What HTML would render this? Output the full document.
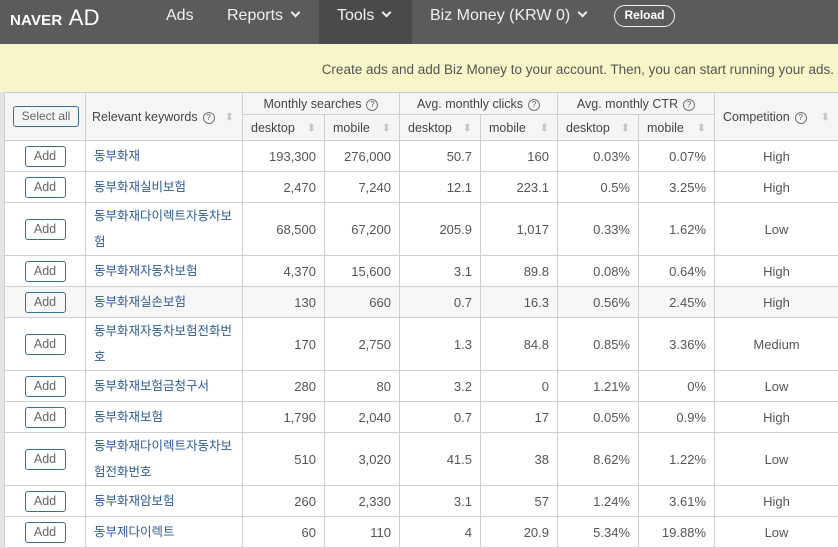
<!DOCTYPE html>
<html><head><meta charset="utf-8"><style>
*{margin:0;padding:0;box-sizing:border-box}
body{width:838px;height:548px;overflow:hidden;font-family:"Liberation Sans","Noto Sans CJK KR",sans-serif;background:#fff;position:relative}
.nav{position:absolute;left:0;top:0;width:838px;height:44px;background:#5b5b5b;color:#fff}
.nav span{position:absolute;top:7px;font-size:16px;color:#f0f0f0}
.logo{position:absolute;left:10px;top:5px;color:#fff;font-size:15px;font-weight:900;letter-spacing:.2px}
.logo b{font-weight:normal;font-size:22px;margin-left:2px}
.tools{position:absolute;left:319px;top:0;width:93px;height:44px;background:#4a4a4a}
.chev{display:inline-block;width:7px;height:7px;border-right:2px solid #eee;border-bottom:2px solid #eee;transform:rotate(45deg);margin-left:9px;position:relative;top:-4px}
.reload{position:absolute;left:614px;top:5px;width:61px;height:22px;border:1.5px solid #eee;border-radius:12px;font-size:12px;font-weight:bold;color:#fff;text-align:center;line-height:19px}
.banner{position:absolute;left:0;top:44px;width:838px;height:48px;background:#f7f6c9;color:#555;font-size:13.5px;text-align:right;padding:18px 4px 0 0}
.wrap{position:absolute;left:0;top:92px;width:838px;height:456px;background:#e4e4e4;padding-left:4px}
table{border-collapse:collapse;table-layout:fixed;width:834px;background:#fff;font-size:13px;color:#555}
td,th{border:1px solid #cfcfcf;padding:0 8px}
th{background:#f5f5f5;color:#444;font-weight:normal;font-size:12.5px;position:relative}
.s{position:absolute;right:8px;top:50%;transform:translateY(-50%);color:#c4c4c4;font-size:11px}
.q{display:inline-block;width:12px;height:12px;border:1px solid #777;border-radius:50%;font-size:8px;line-height:10px;text-align:center;margin-left:5px;vertical-align:1px;color:#555}
.btn{display:inline-block;width:41px;height:21px;border:1px solid #3a6f95;border-radius:3px;color:#666;text-align:center;line-height:19px;font-size:12.5px}
td.c{text-align:center}
td.r{text-align:right}
td.k{color:#2d5b98;line-height:26px;padding-right:8px;font-size:12.5px}
tr.h1{height:22px}tr.h2{height:26px}
tr.n{height:31px}tr.t{height:53px}tr.g td{background:#f7f7f7}
</style></head><body>
<div class="nav">
<div class="logo">NAVER <b>AD</b></div>
<div class="tools"></div>
<span style="left:166px">Ads</span>
<span style="left:227px">Reports<i class="chev"></i></span>
<span style="left:337px">Tools<i class="chev"></i></span>
<span style="left:430px">Biz Money (KRW 0)<i class="chev"></i></span>
<div class="reload">Reload</div>
</div>
<div class="banner">Create ads and add Biz Money to your account. Then, you can start running your ads.</div>
<div class="wrap">
<table>
<colgroup><col style="width:81px"><col style="width:157px"><col style="width:82px"><col style="width:75px"><col style="width:81px"><col style="width:77px"><col style="width:81px"><col style="width:76px"><col style="width:124px"></colgroup>
<tr class="h1"><th rowspan="2"><span class="btn" style="width:66px;font-size:12px">Select all</span></th><th rowspan="2" style="text-align:left;padding-left:6px">Relevant keywords<span class="q">?</span><span class="s">⬍</span></th><th colspan="2">Monthly searches<span class="q">?</span></th><th colspan="2">Avg. monthly clicks<span class="q">?</span></th><th colspan="2">Avg. monthly CTR<span class="q">?</span></th><th rowspan="2" style="text-align:left">Competition<span class="q">?</span><span class="s">⬍</span></th></tr>
<tr class="h2"><th style="text-align:left">desktop<span class="s">⬍</span></th><th style="text-align:left">mobile<span class="s">⬍</span></th><th style="text-align:left">desktop<span class="s">⬍</span></th><th style="text-align:left">mobile<span class="s">⬍</span></th><th style="text-align:left">desktop<span class="s">⬍</span></th><th style="text-align:left">mobile<span class="s">⬍</span></th></tr>
<tr class="n"><td class="c"><span class="btn">Add</span></td><td class="k">동부화재</td><td class="r">193,300</td><td class="r">276,000</td><td class="r">50.7</td><td class="r">160</td><td class="r">0.03%</td><td class="r">0.07%</td><td class="c">High</td></tr>
<tr class="n"><td class="c"><span class="btn">Add</span></td><td class="k">동부화재실비보험</td><td class="r">2,470</td><td class="r">7,240</td><td class="r">12.1</td><td class="r">223.1</td><td class="r">0.5%</td><td class="r">3.25%</td><td class="c">High</td></tr>
<tr class="t"><td class="c"><span class="btn">Add</span></td><td class="k">동부화재다이렉트자동차보험</td><td class="r">68,500</td><td class="r">67,200</td><td class="r">205.9</td><td class="r">1,017</td><td class="r">0.33%</td><td class="r">1.62%</td><td class="c">Low</td></tr>
<tr class="n"><td class="c"><span class="btn">Add</span></td><td class="k">동부화재자동차보험</td><td class="r">4,370</td><td class="r">15,600</td><td class="r">3.1</td><td class="r">89.8</td><td class="r">0.08%</td><td class="r">0.64%</td><td class="c">High</td></tr>
<tr class="n g"><td class="c"><span class="btn">Add</span></td><td class="k">동부화재실손보험</td><td class="r">130</td><td class="r">660</td><td class="r">0.7</td><td class="r">16.3</td><td class="r">0.56%</td><td class="r">2.45%</td><td class="c">High</td></tr>
<tr class="t"><td class="c"><span class="btn">Add</span></td><td class="k">동부화재자동차보험전화번호</td><td class="r">170</td><td class="r">2,750</td><td class="r">1.3</td><td class="r">84.8</td><td class="r">0.85%</td><td class="r">3.36%</td><td class="c">Medium</td></tr>
<tr class="n"><td class="c"><span class="btn">Add</span></td><td class="k">동부화재보험금청구서</td><td class="r">280</td><td class="r">80</td><td class="r">3.2</td><td class="r">0</td><td class="r">1.21%</td><td class="r">0%</td><td class="c">Low</td></tr>
<tr class="n"><td class="c"><span class="btn">Add</span></td><td class="k">동부화재보험</td><td class="r">1,790</td><td class="r">2,040</td><td class="r">0.7</td><td class="r">17</td><td class="r">0.05%</td><td class="r">0.9%</td><td class="c">High</td></tr>
<tr class="t"><td class="c"><span class="btn">Add</span></td><td class="k">동부화재다이렉트자동차보험전화번호</td><td class="r">510</td><td class="r">3,020</td><td class="r">41.5</td><td class="r">38</td><td class="r">8.62%</td><td class="r">1.22%</td><td class="c">Low</td></tr>
<tr class="n"><td class="c"><span class="btn">Add</span></td><td class="k">동부화재암보험</td><td class="r">260</td><td class="r">2,330</td><td class="r">3.1</td><td class="r">57</td><td class="r">1.24%</td><td class="r">3.61%</td><td class="c">High</td></tr>
<tr class="n"><td class="c"><span class="btn">Add</span></td><td class="k">동부제다이렉트</td><td class="r">60</td><td class="r">110</td><td class="r">4</td><td class="r">20.9</td><td class="r">5.34%</td><td class="r">19.88%</td><td class="c">Low</td></tr>
</table>
</div>
</body></html>
